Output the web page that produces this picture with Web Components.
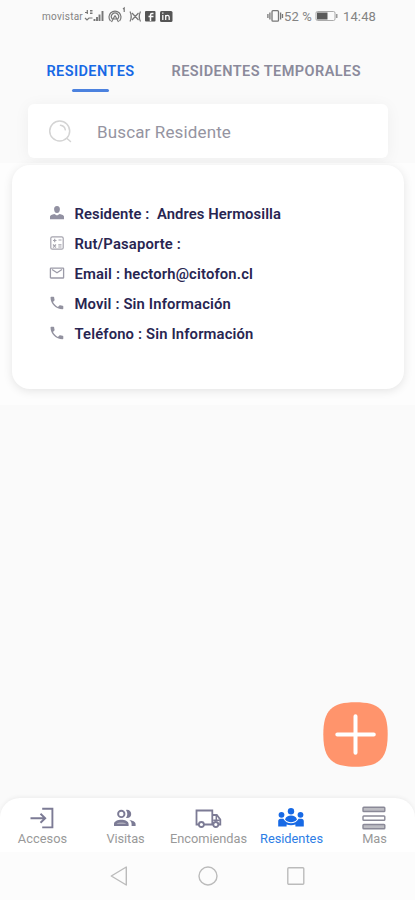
<!DOCTYPE html>
<html lang="es">
<head>
<meta charset="utf-8">
<meta name="viewport" content="width=device-width">
<title>Residentes</title>
<style>
html,body{margin:0;height:100%;background:#fafafa}
body{font-family:Roboto,"Liberation Sans",sans-serif;overflow:hidden}
</style>
</head>
<body>
<resident-app></resident-app>
<script>
const define = (name, html, ready) => {
  const t = document.createElement('template');
  t.innerHTML = html;
  customElements.define(name, class extends HTMLElement {
    connectedCallback() {
      if (this.shadowRoot) return;
      this.attachShadow({mode: 'open'}).append(t.content.cloneNode(true));
      if (ready) ready(this, this.shadowRoot);
    }
  });
};

const icons = {
  user: '<svg width="16" height="16" viewBox="0 0 16 16" fill="#9291a2"><path d="M8 1C5.9 1 5 2.4 5.1 4.4 5.3 6.6 6.3 8 8 8s2.7-1.4 2.9-3.6C11 2.4 10.100 1 8 1zM1 14.200V11.500c0-1.300 2-2 4.300-2.500L8 10.500 10.700 9C13 9.500 15 10.200 15 11.500v2.700z"/></svg>',
  id: '<svg width="16" height="16" viewBox="0 0 16 16" fill="none" stroke="#a5a4ae" stroke-width="1.200"><rect x="1.800" y="1.800" width="12.400" height="12.400" rx="1.500"/><path d="M4 5.500h3.500M5.700 3.800v3.500M9.500 5h3M4 9.500l3 3M7 9.500l-3 3M9.300 9.800h3.200M9.300 12h3.200"/></svg>',
  mail: '<svg width="16" height="16" viewBox="0 0 16 16" fill="none" stroke="#9c9ba8" stroke-width="1.300"><rect x="1.400" y="3.200" width="13.200" height="9.800" rx=".6"/><path d="M3 4.500l5 3.300 5-3.300"/></svg>',
  phone: '<svg width="16" height="16" viewBox="0 0 16 16" fill="#92919f"><path d="M1.500 2.500c0-.5.300-.8.800-.8h2.200c.4 0 .7.300.7.700 0 .8.200 1.600.4 2.400.1.300 0 .6-.2.800L4 7c1.100 2.200 2.700 3.800 4.900 4.900l1.500-1.500c.2-.2.500-.2.700-.1.800.2 1.600.4 2.500.4.400 0 .7.300.7.700v2c0 .5-.3.800-.7.800C7 14.200 1.500 8.900 1.500 2.500z"/></svg>',
  enter: '<svg width="26" height="24" viewBox="0 0 26 24" fill="none" stroke="#7c7b95" stroke-width="1.900"><path d="M13.200 2.800h10.200v18.600H13.200M1.500 12.200h14M11.500 7.700l4.700 4.500-4.700 4.500"/></svg>',
  people: '<svg width="26" height="24" viewBox="0 0 26 24" fill="#7c7b95"><circle cx="9.300" cy="7.900" r="3.200" fill="none" stroke="#7c7b95" stroke-width="1.900"/><path d="M14 3.900c2.900-.6 5.200 1.300 5.200 4s-2.300 4.600-5.200 4c1.800-2.300 1.800-5.700 0-8zM2 20v-2.100c0-2.600 4-4.100 7.300-4.100s7.300 1.500 7.300 4.100V20zM17.300 14c3.400.5 6.300 1.800 6.300 4v2h-4v-2.100c0-1.700-.9-2.900-2.300-3.900z"/><path d="M4.500 18h9.600c-1.600-1.900-7.700-2-9.600 0z" fill="#aeadbb"/></svg>',
  truck: '<svg width="28" height="24" viewBox="0 0 28 24" fill="none" stroke="#7c7b95" stroke-width="1.800"><path d="M5 18.500H2.500v-14h15.800v14H10M18.300 9h4.500l3.500 4.500v5H25"/><path d="M19.200 14.300h6.500M22.300 10v4" stroke-width="1.500"/><circle cx="7.400" cy="18.500" r="2.500"/><circle cx="21.800" cy="18.500" r="2.500"/></svg>',
  group: '<svg width="28" height="24" viewBox="0 0 28 24" fill="#1769e5"><circle cx="14" cy="5.300" r="3.200"/><circle cx="4.500" cy="8.800" r="2.900"/><circle cx="23.500" cy="8.800" r="2.900"/><path d="M8 13.500c1-3 3-4 6-4s5 1 6 4c-3 3.500-9 3.500-12 0zM1.200 20.500v-5.300c0-1.600.9-2.500 2.500-2.500h2.700c1.800 3.300 4.400 4.500 7.600 4.500s5.800-1.200 7.600-4.500h2.700c1.600 0 2.500.9 2.500 2.500v5.300H18.400v-1.900c-2.800.8-6 .8-8.800 0v1.900z"/></svg>',
  rows: '<svg width="26" height="24" viewBox="0 0 26 24" stroke="#8a8997" stroke-width="1.400"><rect x="2" y="1.300" width="21.800" height="4.200" rx=".8" fill="#bdbdc3"/><rect x="2" y="10" width="21.800" height="4.200" rx=".8" fill="#fff"/><rect x="2" y="18.500" width="21.800" height="4.200" rx=".8" fill="#bdbdc3"/></svg>'
};
const setIcon = (host, root) => {
  root.querySelector('.icon').innerHTML = icons[host.getAttribute('icon')];
};

/* A single line of text tracked out to the width in its "w" attribute. */
define('tracked-text', `<style>:host{display:inline-block;white-space:pre;line-height:1}span{display:inline-block}</style><span><slot></slot></span>`, (host, root) => {
  const span = root.querySelector('span');
  const w = parseFloat(host.getAttribute('w'));
  host.style.width = w + 'px';
  span.style.letterSpacing = '0px';
  span.style.letterSpacing = (w - span.getBoundingClientRect().width) / host.textContent.length + 'px';
});

define('status-bar', `<style>
:host{display:flex;height:34px;box-sizing:border-box;padding:0 39px 2px 42px;align-items:center;color:#838383;font-size:13px}
.left{display:flex;align-items:center;flex:1}.op{font-size:10px;padding-top:1px}
.right{display:flex;align-items:center}svg{display:block}
.bat{margin:0 4px 0 3px}
</style>
<div class="left"><tracked-text class="op" w="41">movistar</tracked-text>
<svg width="94" height="20" viewBox="-1 0 94 20" fill="none" stroke="#777" stroke-width="1.200">
<path d="M1 6.500h3M3.300 4v4M6 4.500h2.500M6 6h2.500M6 7.500h2.500M1 12l2 2 2-2h3.500"/>
<path d="M10.500 15v-2M13 15v-4M15.500 15V8.500M18.500 15V5" stroke-width="1.900"/>
<path d="M26.500 15a6 6 0 1 1 9 0M28.300 13a3.600 3.600 0 1 1 5.400 0M31 9.500l-3.500 6.500M31 9.500l3.500 6.500M29.500 13h3M39 3l1.200-1v4"/>
<path d="M46 5.500q2.500 5 0 10M56.500 5.500q-2.500 5 0 10M48 7l6.500 7M54.500 7L48 14"/>
<rect x="61" y="5" width="10.500" height="10.500" rx="1" fill="#555" stroke="none"/><path d="M69.500 7.500H68q-1.500 0-1.500 1.500v6M64.500 10.500h5" stroke="#fafafa" stroke-width="1.500"/>
<rect x="76" y="5" width="12.500" height="11" rx="1.500" fill="#555" stroke="none"/><path d="M78.800 9v5M78.800 6.500v1.300M81.700 14V9M81.700 11q0-1.700 1.700-1.700T85.200 11v3" stroke="#fafafa" stroke-width="1.300"/>
</svg></div>
<div class="right"><svg width="17" height="16" viewBox="0 0 17 16" fill="none" stroke="#777" stroke-width="1.300"><rect x="5" y="2.700" width="6.500" height="10.500" rx="1"/><path d="M2.900 4.500v7M13.600 4.500v7M.9 6v4M15.500 6v4"/></svg>
<tracked-text w="28">52 %</tracked-text>
<svg class="bat" width="24" height="12" viewBox="0 0 24 12"><rect x="1" y="1.500" width="19" height="9" rx="1.500" fill="none" stroke="#aaa"/><path d="M2 2.500h10.500v7H2z" fill="#5a5a5a"/><path d="M21.700 4v4" stroke="#999" stroke-width="1.600"/></svg>
<tracked-text w="33">14:48</tracked-text></div>`);

define('tab-bar', `<style>
:host{display:flex;height:70px;box-sizing:border-box;padding:30px 0 0 46.500px;gap:37px;font-size:14.500px;font-weight:600;color:#8b8a9b}
.tab{display:flex;flex-direction:column;align-items:center}
.tab tracked-text{padding-top:.6px}
.on{color:#1769e5}.on::after{content:"";width:37px;height:2.500px;border-radius:2px;background:#4c82df;margin-top:10.400px}
</style><div class="tab on"><tracked-text w="88">RESIDENTES</tracked-text></div><div class="tab"><tracked-text w="189.500">RESIDENTES TEMPORALES</tracked-text></div>`);

define('search-box', `<style>
:host{display:flex;align-items:center;height:54px;margin:0 27px 0 28px;box-sizing:border-box;padding-left:20px;gap:24px;border-radius:6px;background:#fff;box-shadow:0 2px 16px rgba(0,0,0,.05);font-size:17px;color:#9594a1}
svg{display:block}tracked-text{padding-top:2px}
</style><svg width="25" height="25" viewBox="0 0 25 25" fill="none" stroke="#d4d4d4" stroke-width="1.500" stroke-linecap="round"><circle cx="11.700" cy="12" r="10"/><path d="M19 19.500l3.500 3M12.500 6.300q4 .5 4.800 4.500"/></svg><tracked-text w="134">Buscar Residente</tracked-text>`);

define('info-row', `<style>
:host{display:flex;align-items:center;height:30px;gap:9.500px;font-size:14.800px;font-weight:600;color:#282551}
.icon{display:block;width:16px;height:16px}.icon svg{display:block}
::slotted(tracked-text){padding-top:2px}
</style><span class="icon"></span><slot></slot>`, setIcon);

define('resident-card', `<style>
:host{display:block;height:242px;box-sizing:border-box;margin-top:5px;padding:2px 11px 0 12px;background:#fdfdfd}
.card{height:224px;box-sizing:border-box;padding:33px 0 0 37px;background:#fff;border-radius:18px;box-shadow:0 2px 10px rgba(0,0,0,.1)}
</style><div class="card"><slot></slot></div>`);

define('add-button', `<style>
:host{position:absolute;left:323px;top:702px;width:65px;height:65px}svg{display:block}
</style><svg width="65" height="65" viewBox="0 0 65 65"><path d="M32.500.3C56 .3 64.700 8 64.700 32.500S56 64.700 32.500 64.700.3 57 .3 32.500 9 .3 32.500.3z" fill="#ff946c"/><path d="M14.300 32.600h36.500M32.500 14.300v36.500" stroke="#fff" stroke-width="4" stroke-linecap="round"/></svg>`);

define('nav-item', `<style>
:host{display:flex;flex-direction:column;align-items:center;flex:1;padding-top:8px;gap:3px;font-size:12.800px;color:#999}
:host([active]){color:#2d7de5}.icon{display:block;height:24px}.icon svg{display:block}
::slotted(tracked-text){margin-left:2px}
</style><span class="icon"></span><slot></slot>`, setIcon);

define('bottom-nav', `<style>
:host{display:flex;height:54px;background:#fff;border-radius:20px 20px 0 0;box-shadow:0 -1px 4px rgba(0,0,0,.06)}
</style><slot></slot>`);

define('system-nav', `<style>
:host{display:flex;height:48px;align-items:center;justify-content:space-between;padding:0 109px;background:#fcfcfc;position:relative}
svg{display:block}
</style><svg width="20" height="22" viewBox="0 0 20 22" fill="none" stroke="#bbb" stroke-width="1.400"><path d="M17.300 2v18L2.300 11z" stroke-linejoin="round"/></svg>
<svg width="22" height="22" viewBox="0 0 22 22" fill="none" stroke="#bbb" stroke-width="1.400"><circle cx="11" cy="11" r="9"/></svg>
<svg width="20" height="22" viewBox="0 0 20 22" fill="none" stroke="#bbb" stroke-width="1.400"><rect x="1.800" y="2.800" width="16" height="16.500" rx="1"/></svg>`);

define('resident-app', `<style>
:host{display:flex;flex-direction:column;width:415px;height:900px;position:relative;background:#fafafa;overflow:hidden}
.space{flex:1}
</style>
<status-bar></status-bar><tab-bar></tab-bar><search-box></search-box>
<resident-card>
<info-row icon="user"><tracked-text w="206.500">Residente :  Andres Hermosilla</tracked-text></info-row>
<info-row icon="id"><tracked-text w="106.500">Rut/Pasaporte :</tracked-text></info-row>
<info-row icon="mail"><tracked-text w="178.500">Email : hectorh@citofon.cl</tracked-text></info-row>
<info-row icon="phone"><tracked-text w="156.500">Movil : Sin Información</tracked-text></info-row>
<info-row icon="phone"><tracked-text w="179">Teléfono : Sin Información</tracked-text></info-row>
</resident-card>
<div class="space"></div>
<bottom-nav>
<nav-item icon="enter"><tracked-text w="49.500">Accesos</tracked-text></nav-item>
<nav-item icon="people"><tracked-text w="38">Visitas</tracked-text></nav-item>
<nav-item icon="truck"><tracked-text w="77">Encomiendas</tracked-text></nav-item>
<nav-item icon="group" active><tracked-text w="63">Residentes</tracked-text></nav-item>
<nav-item icon="rows"><tracked-text w="24.500">Mas</tracked-text></nav-item>
</bottom-nav>
<system-nav></system-nav>
<add-button></add-button>`);
</script>
</body>
</html>
